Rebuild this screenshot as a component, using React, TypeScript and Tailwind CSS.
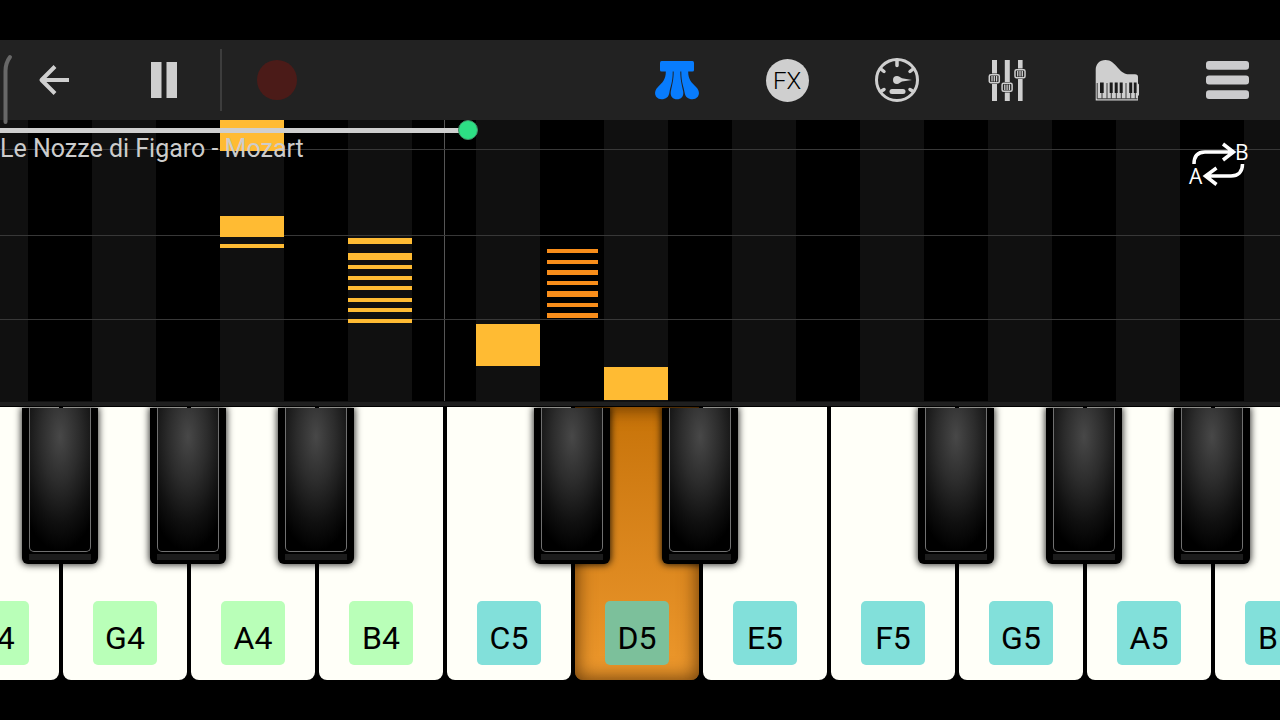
import type { ReactNode } from "react";

type Note = { top: number; height: number };
type Tone = "green" | "cyan" | "pressed";
type PianoKey = {
  name: string;
  tone: Tone;
  sharp?: boolean;
  octaveEnd?: boolean;
  notes?: Note[];
  sharpNotes?: Note[];
};

const KEYS: PianoKey[] = [
  { name: "F4", tone: "green", sharp: true },
  { name: "G4", tone: "green", sharp: true },
  {
    name: "A4",
    tone: "green",
    sharp: true,
    notes: [
      { top: 0, height: 31 },
      { top: 96, height: 21 },
      { top: 124, height: 4 },
    ],
  },
  {
    name: "B4",
    tone: "green",
    octaveEnd: true,
    notes: [
      { top: 118, height: 6 },
      { top: 133, height: 7 },
      { top: 145, height: 4 },
      { top: 156, height: 4 },
      { top: 166, height: 4 },
      { top: 178, height: 4 },
      { top: 188, height: 4 },
      { top: 199, height: 4 },
    ],
  },
  {
    name: "C5",
    tone: "cyan",
    sharp: true,
    notes: [{ top: 204, height: 42 }],
    sharpNotes: [
      { top: 129, height: 4 },
      { top: 140, height: 4 },
      { top: 150, height: 5 },
      { top: 161, height: 4 },
      { top: 171, height: 6 },
      { top: 183, height: 4 },
      { top: 193, height: 5 },
    ],
  },
  { name: "D5", tone: "pressed", sharp: true, notes: [{ top: 247, height: 33 }] },
  { name: "E5", tone: "cyan" },
  { name: "F5", tone: "cyan", sharp: true },
  { name: "G5", tone: "cyan", sharp: true },
  { name: "A5", tone: "cyan", sharp: true },
  { name: "B5", tone: "cyan", octaveEnd: true },
];

const TILE: Record<Tone, string> = {
  green: "bg-[#b9ffb8]",
  cyan: "bg-[#82e0da]",
  pressed: "bg-[#7cc09b]",
};

function ToolButton({ label, children }: { label: string; children: ReactNode }) {
  return (
    <button type="button" aria-label={label} className="flex h-20 w-[110px] shrink-0 items-center justify-center">
      {children}
    </button>
  );
}

function BackIcon() {
  return (
    <svg width="32" height="32" viewBox="0 0 32 32" fill="none" stroke="#cfcfcf" strokeWidth="4" aria-hidden="true">
      <path d="M31 16H4M17 2.500L3.500 16L17 29.500" strokeLinejoin="round" />
    </svg>
  );
}

function PauseIcon() {
  return (
    <svg width="26" height="36" viewBox="0 0 26 36" fill="#cfcfcf" aria-hidden="true">
      <path d="M0 0H10.500V36H0ZM15.500 0H26V36H15.500Z" />
    </svg>
  );
}

function PedalIcon() {
  return (
    <svg width="44" height="40" viewBox="0 0 44 40" fill="#087cfd" aria-hidden="true">
      <path d="M6.500 1H37.500Q39 1 39 3V10Q39 11.500 37.500 11.500H6.500Q5 11.500 5 10V3Q5 1 6.500 1Z" />
      <path d="M10.800 11C11 19 8 22 2.500 27.500C-2 32 0 39.300 6.500 39.300C11 39.300 13.700 37 14.400 32.500C15.500 26 17.900 22 17.700 11Z" />
      <path d="M33.200 11C33 19 36 22 41.500 27.500C46 32 44 39.300 37.500 39.300C33 39.300 30.300 37 29.600 32.500C28.500 26 26.100 22 26.300 11Z" />
      <path d="M18.700 11C18.700 20 17.300 24 15.800 31.500C15 36.500 18 39.300 22 39.300C26 39.300 29 36.500 28.200 31.500C26.700 24 25.300 20 25.300 11Z" />
    </svg>
  );
}

function TempoIcon() {
  return (
    <svg width="46" height="46" viewBox="0 0 46 46" aria-hidden="true">
      <circle cx="23" cy="23" r="20.500" fill="none" stroke="#cfcfcf" strokeWidth="3" />
      <path
        d="M23 3V8.500M7.500 12.500L10 14.500M38.500 12.500L36 14.500M7.500 34L10 32.500M38.500 34L36 32.500"
        stroke="#cfcfcf"
        strokeWidth="3.500"
        strokeLinecap="round"
      />
      <path d="M23 19C25 19 26 20.500 28 21.200L38 23L28 24.600C26 25.500 25 27 23 27A4 4 0 0 1 23 19Z" fill="#cfcfcf" />
      <rect x="15.500" y="32" width="16" height="5" rx="2.500" fill="#cfcfcf" />
    </svg>
  );
}

function MixerIcon() {
  return (
    <svg width="40" height="42" viewBox="0 0 40 42" aria-hidden="true">
      <path d="M5 1H10V42H5ZM17.800 1H22.800V42H17.800ZM31 1H35.600V42H31Z" fill="#cfcfcf" />
      {[
        [2, 15.5],
        [14.8, 24],
        [27.7, 10.5],
      ].map(([x, y]) => (
        <g key={x}>
          <rect x={x - 1} y={y - 1} width="12.600" height="10.400" rx="2" fill="#222" />
          <rect x={x + 0.3} y={y + 0.2} width="10" height="8" rx="1.500" fill="#222" stroke="#cfcfcf" strokeWidth="1.500" />
          <path d={`M${x + 3} ${y + 1.5}v5.400M${x + 5.3} ${y + 1.5}v5.400M${x + 7.6} ${y + 1.5}v5.400`} stroke="#cfcfcf" strokeWidth="1.300" />
        </g>
      ))}
    </svg>
  );
}

function GrandPianoIcon() {
  return (
    <svg width="44" height="42" viewBox="0 0 44 42" aria-hidden="true">
      <path
        d="M.7 41.500V11C.7 5 4.500 1 10.500 1C16 1 19 4.500 23 9C27 13.500 30 15.300 34 15.300H40Q43 15.300 43 18V24.500L44 25.500V36L43 37V41.500Z"
        fill="#cfcfcf"
      />
      <path
        d="M2.200 24V39.800H42.500M7 34V39.800M12 24V39.800M16.300 34V39.800M21.300 34V39.800M26.300 34V39.800M31 24V39.800M35.700 34V39.800M40.300 34V39.800"
        fill="none"
        stroke="#3a3a3a"
        strokeWidth="1"
      />
      <path
        d="M5 23.500H8.700V34H5ZM14.700 23.500H17.700V34H14.700ZM19.700 23.500H22.700V34H19.700ZM24.700 23.500H27.700V34H24.700ZM34.200 23.500H37.200V34H34.200ZM38.800 23.500H41.600V34H38.800Z"
        fill="#1b1b1b"
      />
    </svg>
  );
}

function MenuIcon() {
  return (
    <svg width="43" height="38" viewBox="0 0 43 38" fill="#cbcbcd" aria-hidden="true">
      <rect width="43" height="8.800" rx="3" />
      <rect y="14.600" width="43" height="8.800" rx="3" />
      <rect y="29.200" width="43" height="8.800" rx="3" />
    </svg>
  );
}

function LoopIcon() {
  return (
    <svg width="64" height="46" viewBox="0 0 64 46" fill="none" stroke="#fff" strokeWidth="3.500" aria-hidden="true">
      <path d="M6 22C6 14 10 10 17 10H45M35 2L45.500 10L35 18" />
      <path d="M54.500 22C54.500 30 50 34 43 34H18M28.500 26L17.500 34L28.500 42.500" />
      <g fill="#fff" stroke="none" fontFamily="'Open Sans', sans-serif" fontSize="21" fontWeight="500">
        <text x="1" y="41.500">
          A
        </text>
        <text x="47" y="18">
          B
        </text>
      </g>
    </svg>
  );
}

function Toolbar() {
  return (
    <header className="flex h-20 justify-between overflow-hidden bg-[#222222]">
      <div className="-ml-px flex items-center">
        <ToolButton label="Back">
          <BackIcon />
        </ToolButton>
        <ToolButton label="Pause">
          <PauseIcon />
        </ToolButton>
        <div className="ml-px h-[62px] w-0.5 bg-[#3d3d3d]" />
        <ToolButton label="Record">
          <span className="size-10 rounded-full bg-[#4b1b18]" />
        </ToolButton>
      </div>
      <div className="-mr-0.5 flex items-center">
        <ToolButton label="Pedal">
          <PedalIcon />
        </ToolButton>
        <ToolButton label="Effects">
          <span className="flex size-[43px] items-center justify-center rounded-full bg-[#cfcfcf] pt-0.5 text-2xl font-light text-black">
            FX
          </span>
        </ToolButton>
        <ToolButton label="Tempo">
          <TempoIcon />
        </ToolButton>
        <ToolButton label="Mixer">
          <MixerIcon />
        </ToolButton>
        <ToolButton label="Instrument">
          <GrandPianoIcon />
        </ToolButton>
        <ToolButton label="Menu">
          <MenuIcon />
        </ToolButton>
      </div>
    </header>
  );
}

function NoteRoll() {
  return (
    <section aria-label="Notes" className="relative h-[281px] overflow-hidden bg-black">
      <div className="-ml-[68px] flex h-full">
        {KEYS.map((k) => (
          <div key={k.name} className="relative flex w-32 shrink-0 grow justify-center">
            <div className="relative w-1/2 bg-[#101010]">
              {k.notes?.map((n) => (
                <div key={n.top} className="absolute inset-x-0 z-10 bg-[#ffbb33]" style={{ top: n.top, height: n.height }} />
              ))}
            </div>
            {k.sharpNotes?.map((n) => (
              <div key={n.top} className="absolute -right-[26px] z-10 w-[51px] bg-[#f88d1a]" style={{ top: n.top, height: n.height }} />
            ))}
            {k.octaveEnd && <div className="absolute inset-y-0 -right-px w-px bg-[#555555]" />}
          </div>
        ))}
      </div>
      <div className="absolute inset-x-0 top-[29px] h-px bg-[#383838]" />
      <div className="absolute inset-x-0 top-[115px] h-px bg-[#383838]" />
      <div className="absolute inset-x-0 top-[199px] h-px bg-[#383838]" />
      <div className="absolute inset-x-0 top-0 z-20">
        <input
          type="range"
          aria-label="Position"
          min={0}
          max={1260}
          defaultValue={458}
          className="block h-[21px] w-full appearance-none bg-transparent [&::-webkit-slider-runnable-track]:h-[5px] [&::-webkit-slider-runnable-track]:bg-linear-to-r [&::-webkit-slider-runnable-track]:from-[#cfcfcf] [&::-webkit-slider-runnable-track]:from-[36.5%] [&::-webkit-slider-runnable-track]:to-transparent [&::-webkit-slider-runnable-track]:to-[36.5%] [&::-webkit-slider-thumb]:-mt-2 [&::-webkit-slider-thumb]:size-5 [&::-webkit-slider-thumb]:appearance-none [&::-webkit-slider-thumb]:rounded-full [&::-webkit-slider-thumb]:border [&::-webkit-slider-thumb]:border-[#3f8f66] [&::-webkit-slider-thumb]:bg-[#2ddf84]"
        />
        <h1 className="-mt-1 text-[25px] leading-6 text-[#cccccc]">Le Nozze di Figaro - Mozart</h1>
      </div>
      <button type="button" aria-label="Loop from A to B" className="absolute top-[22px] right-7 z-20">
        <LoopIcon />
      </button>
    </section>
  );
}

function BlackKey({ label }: { label: string }) {
  return (
    <button
      type="button"
      aria-label={label}
      className="absolute top-px -right-[37px] z-10 flex h-[156px] w-[76px] flex-col items-center rounded-b-md bg-black shadow-[0_0_7px_1px_rgba(0,0,0,0.8)]"
    >
      <span className="h-36 w-[62px] rounded-b-[5px] border border-t-0 border-[#707070] bg-[radial-gradient(ellipse_80%_80%_at_50%_20%,#484848_0%,#2c2c2c_40%,#101010_75%,#000000_100%)]" />
      <span className="mt-0.5 h-[6px] w-[62px] bg-[#1c1c1c]" />
    </button>
  );
}

function Keyboard() {
  return (
    <section aria-label="Keyboard" className="overflow-hidden bg-black">
      <div className="-ml-[67px] flex h-[273px]">
        {KEYS.map((k) => (
          <div key={k.name} className="relative w-32 shrink-0 grow px-0.5">
            <button
              type="button"
              className={
                k.tone === "pressed"
                  ? "flex h-full w-full items-end justify-center rounded-b-lg bg-linear-to-b from-[#c77307] to-[#ed982c] pb-[15px] shadow-[inset_0_0_18px_2px_rgba(70,35,0,0.75)]"
                  : "flex h-full w-full items-end justify-center rounded-b-lg bg-[#fffff8] pb-[15px]"
              }
            >
              <span className={`flex size-16 items-center justify-center rounded-[5px] pt-2.5 text-[32px] text-black ${TILE[k.tone]}`}>
                {k.name}
              </span>
            </button>
            {k.sharp && <BlackKey label={`${k.name[0]}♯${k.name[1]}`} />}
          </div>
        ))}
      </div>
    </section>
  );
}

export default function App() {
  return (
    <main className="relative min-h-screen overflow-hidden bg-black py-10 font-[Roboto,sans-serif]">
      <Toolbar />
      <NoteRoll />
      <div className="h-[6px] border-y border-t-[#111111] border-b-black bg-[#1f1f1f]" />
      <Keyboard />
      <svg className="pointer-events-none absolute top-[54px] left-0" width="14" height="74" viewBox="0 0 14 74" fill="none" aria-hidden="true">
        <path d="M10 3C7 7 5.500 11 5.500 17V68" stroke="#686868" strokeWidth="4" strokeLinecap="round" />
      </svg>
    </main>
  );
}
